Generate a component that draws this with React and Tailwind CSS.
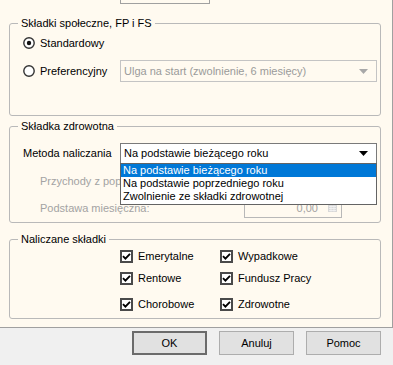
import React from "react";

const Radio = ({ checked }) => (
  <svg width="12" height="12" viewBox="0 0 12 12" className="shrink-0">
    <circle cx="6" cy="6" r="5.2" fill="#fff" stroke="#333" strokeWidth="1.4" />
    {checked && <circle cx="6" cy="6" r="2.2" fill="#111" />}
  </svg>
);

const Check = ({ label }) => (
  <div className="flex items-center h-[14px]">
    <div className="w-[13px] h-[13px] border-2 border-[#4a4a4a] bg-white flex items-center justify-center shrink-0">
      <svg width="9" height="9" viewBox="0 0 9 9">
        <path d="M1 4.2 L3.4 6.6 L8 1.8" fill="none" stroke="#000" strokeWidth="1.9" />
      </svg>
    </div>
    <span className="ml-[5px]">{label}</span>
  </div>
);

const Arrow = ({ color }) => (
  <svg width="9" height="5" viewBox="0 0 9 5">
    <path d="M0 0 H9 L4.5 5 Z" fill={color} />
  </svg>
);

const Group = ({ title, className, children }) => (
  <fieldset
    className={`ml-[9px] w-[372px] border border-[#b9b9b9] rounded-[3px] ${className}`}
  >
    <legend className="ml-[8px] px-[3px] leading-[14px]">{title}</legend>
    {children}
  </fieldset>
);

const Button = ({ children, primary }) => (
  <button
    className={`w-[75px] h-[24px] bg-[#e1e1e1] text-black ${
      primary ? "border-2 border-[#6b6b6b]" : "border border-[#adadad]"
    }`}
  >
    {children}
  </button>
);

export default function App() {
  return (
    <div className="w-[393px] h-[365px] flex flex-col bg-[#f0f0f0] text-[11px] text-black font-['Liberation_Sans',Arial,sans-serif] overflow-hidden">
      <div className="h-[328px] shrink-0 bg-[#fffaf0] border-r border-b border-[#a0a0a0]">
        <div className="ml-[120px] w-[90px] h-[4px] border-x border-b border-[#a0a0a0]" />

        <Group title="Składki społeczne, FP i FS" className="mt-[12px] h-[100px]">
          <div className="pt-[6px] pl-[13px]">
            <div className="flex items-center h-[14px]">
              <Radio checked />
              <span className="ml-[5px]">Standardowy</span>
            </div>
            <div className="flex items-center h-[22px] mt-[10px]">
              <div className="w-[97px] flex items-center">
                <Radio />
                <span className="ml-[5px]">Preferencyjny</span>
              </div>
              <div className="w-[257px] h-[22px] border border-[#c4c4c4] flex items-center justify-between pl-[3px] pr-[8px] text-[#9a9a9a]">
                <span>Ulga na start (zwolnienie, 6 miesięcy)</span>
                <Arrow color="#a8a8a8" />
              </div>
            </div>
          </div>
        </Group>

        <Group title="Składka zdrowotna" className="mt-[3px] h-[104px]">
          <div className="relative pt-[10px] pl-[13px]">
            <div className="flex items-center h-[21px]">
              <span className="w-[97px]">Metoda naliczania</span>
              <div className="w-[257px] h-[21px] border border-[#7a7a7a] bg-white flex items-center justify-between pl-[3px] pr-[8px]">
                <span>Na podstawie bieżącego roku</span>
                <Arrow color="#000" />
              </div>
            </div>

            <div className="text-[#a3a3a3] pl-[17px]">
              <div className="flex items-center h-[20px] mt-[7px]">
                <span className="w-[80px] mr-[124px] overflow-hidden whitespace-nowrap">Przychody z poprzedniego roku:</span>
                <div className="w-[98px] h-[20px] border border-[#b8b8b8]" />
              </div>
              <div className="flex items-center h-[20px] mt-[7px]">
                <span className="w-[204px]">Podstawa miesięczna:</span>
                <div className="w-[98px] h-[20px] border border-[#b8b8b8] flex items-center justify-end pr-[4px] gap-[10px]">
                  <span>0,00</span>
                  <svg width="9" height="8" viewBox="0 0 9 8">
                    <rect x="0" y="0" width="9" height="8" fill="#d8d8d8" />
                    <path d="M1 2.5 H8 M1 4.5 H8 M1 6.5 H8 M3 1.5 V7.5 M6 1.5 V7.5" stroke="#f4f4f4" strokeWidth="0.8" />
                  </svg>
                </div>
              </div>
            </div>

            <div className="absolute left-[110px] top-[30px] w-[257px] border border-[#646464] bg-white leading-[13px] pb-[1px]">
              <div className="bg-[#0078d7] text-white pl-[2px] h-[13px]">Na podstawie bieżącego roku</div>
              <div className="pl-[2px] h-[13px]">Na podstawie poprzedniego roku</div>
              <div className="pl-[2px] h-[13px]">Zwolnienie ze składki zdrowotnej</div>
            </div>
          </div>
        </Group>

        <Group title="Naliczane składki" className="mt-[9px] h-[87px]">
          <div className="grid grid-cols-[100px_100px] pl-[110px] pt-[3px]">
            <Check label="Emerytalne" />
            <Check label="Wypadkowe" />
            <div className="mt-[8px]"><Check label="Rentowe" /></div>
            <div className="mt-[8px]"><Check label="Fundusz Pracy" /></div>
            <div className="mt-[12px]"><Check label="Chorobowe" /></div>
            <div className="mt-[12px]"><Check label="Zdrowotne" /></div>
          </div>
        </Group>
      </div>

      <div className="flex justify-end gap-[12px] pr-[12px] pt-[3px]">
        <Button primary>OK</Button>
        <Button>Anuluj</Button>
        <Button>Pomoc</Button>
      </div>
    </div>
  );
}
